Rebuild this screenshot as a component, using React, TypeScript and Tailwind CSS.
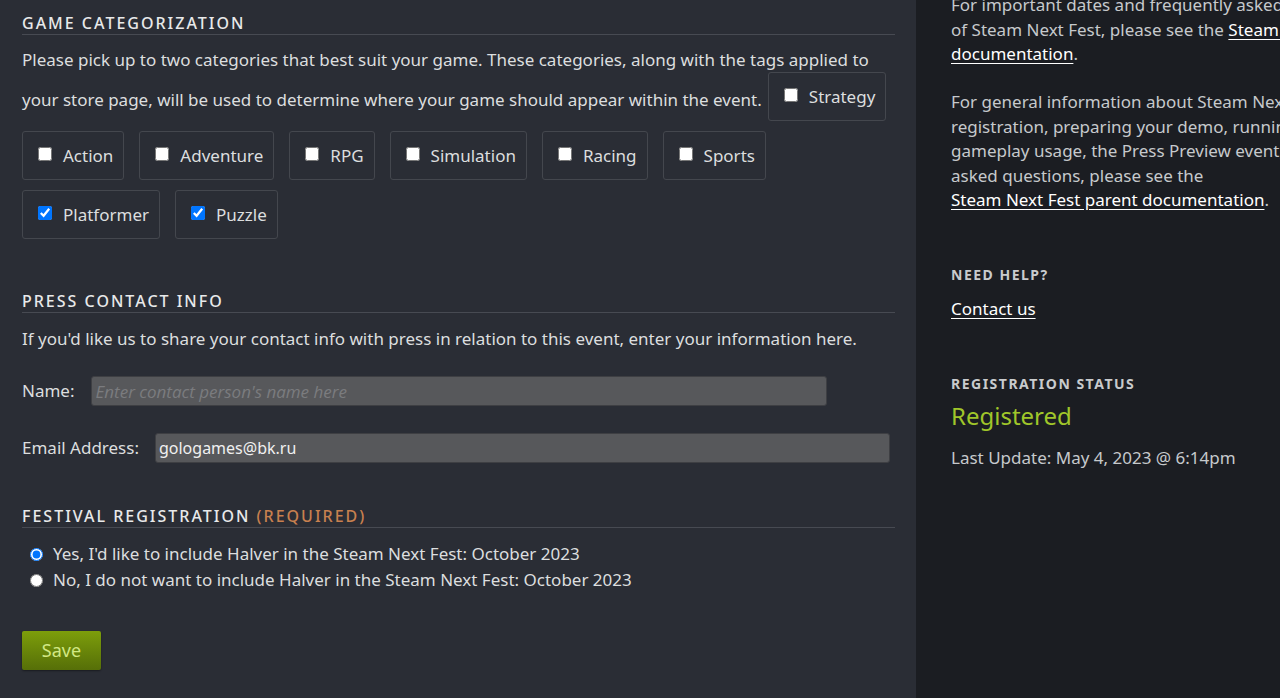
import React from 'react';

const font = { fontFamily: '"Noto Sans", "Open Sans", Arial, sans-serif' };

const SectionTitle: React.FC<{ children: React.ReactNode }> = ({ children }) => (
  <h2 className="text-[16px] leading-[20px] font-medium uppercase tracking-[2px] text-[#e8e9ea] pb-[1px] border-b border-[#474a52]">
    {children}
  </h2>
);

const Category: React.FC<{ label: string; checked?: boolean; className?: string }> = ({ label, checked, className }) => (
  <label
    className={`inline-flex items-center align-middle h-[49px] pl-[15px] pr-[10px] mb-[10px] border border-[#44474e] rounded-[3px] text-[17px] leading-[24px] text-[#dcdedf] ${className ?? 'mr-[15px]'}`}
  >
    <input type="checkbox" defaultChecked={checked} className="m-0 w-[14px] h-[14px] -translate-y-[2px]" />
    <span className="ml-[11px]">{label}</span>
  </label>
);

export default function App() {
  return (
    <div className="flex w-[1280px] h-[698px] overflow-hidden" style={font}>
      {/* Main form column */}
      <div className="w-[916px] shrink-0 bg-[#2a2d35] pl-[22px] pr-[21px] pt-[13px] text-[#dcdedf]">
        <SectionTitle>Game Categorization</SectionTitle>
        <div className="mt-[13px] text-[17px] leading-[24px]">
          Please pick up to two categories that best suit your game. These categories, along with the tags applied to
          your store page, will be used to determine where your game should appear within the event.
          <Category label="Strategy" className="ml-[6px]" />
          <Category label="Action" />
          <Category label="Adventure" />
          <Category label="RPG" />
          <Category label="Simulation" />
          <Category label="Racing" />
          <Category label="Sports" />
          <br />
          <Category label="Platformer" checked />
          <Category label="Puzzle" checked />
        </div>

        <div className="mt-[42px]">
          <SectionTitle>Press Contact Info</SectionTitle>
        </div>
        <p className="mt-[14px] text-[17px] leading-[24px]">
          If you'd like us to share your contact info with press in relation to this event, enter your information here.
        </p>
        <div className="mt-[25px] flex items-center gap-[16px] text-[17px]">
          <span>Name:</span>
          <input
            type="text"
            placeholder="Enter contact person's name here"
            className="w-[736px] h-[30px] px-[4px] bg-[#57585b] border border-[#3e3f43] rounded-[3px] text-[17px] italic text-[#dcdedf] placeholder:text-[#7b7c7f] outline-none"
            style={{ fontFamily: '"Open Sans", "Noto Sans", sans-serif' }}
          />
        </div>
        <div className="mt-[27px] flex items-center gap-[16px] text-[17px]">
          <span>Email Address:</span>
          <input
            type="text"
            defaultValue="gologames@bk.ru"
            className="w-[735px] h-[30px] px-[3px] bg-[#57585b] border border-[#3e3f43] rounded-[3px] text-[16px] text-[#f0f0f0] outline-none"
          />
        </div>

        <div className="mt-[43px]">
          <SectionTitle>
            Festival Registration <span className="text-[#c8804f]">(Required)</span>
          </SectionTitle>
        </div>
        <div className="mt-[13px] text-[17px] leading-[26px]">
          <label className="flex items-center">
            <input type="radio" name="fest" defaultChecked className="m-0 ml-[8px] w-[13px] h-[13px]" />
            <span className="ml-[10px]">Yes, I'd like to include Halver in the Steam Next Fest: October 2023</span>
          </label>
          <label className="flex items-center">
            <input type="radio" name="fest" className="m-0 ml-[8px] w-[13px] h-[13px]" />
            <span className="ml-[10px]">No, I do not want to include Halver in the Steam Next Fest: October 2023</span>
          </label>
        </div>
        <button className="mt-[38px] w-[79px] h-[39px] rounded-[2px] bg-gradient-to-b from-[#7d9e0b] to-[#566f08] text-[#d2e885] text-[18px] shadow-[0_1px_2px_rgba(0,0,0,0.4)]">
          Save
        </button>
      </div>

      {/* Sidebar */}
      <div className="flex-1 min-w-0 overflow-hidden bg-[#1b1d22] pl-[35px] text-[#c6c9cc]">
        <div className="w-[440px] whitespace-nowrap text-[17px] leading-[24.5px]">
          <p className="-mt-[7px]">
            For important dates and frequently asked questions about this edition
            <br />
            of Steam Next Fest, please see the{' '}
            <a href="#" className="text-white underline underline-offset-[3px]">Steam Next Fest</a>
            <br />
            <a href="#" className="text-white underline underline-offset-[3px]">documentation</a>.
          </p>
          <p className="mt-[23.5px]">
            For general information about Steam Next Fest, including
            <br />
            registration, preparing your demo, running a livestream,
            <br />
            gameplay usage, the Press Preview event, and frequently
            <br />
            asked questions, please see the
            <br />
            <a href="#" className="text-white underline underline-offset-[3px]">Steam Next Fest parent documentation</a>.
          </p>

          <h3 className="mt-[53px] text-[14px] leading-[18px] font-bold uppercase tracking-[1.5px] text-[#c9cbcd]">
            Need Help?
          </h3>
          <a href="#" className="block mt-[13px] leading-[24px] text-white underline underline-offset-[3px]">
            Contact us
          </a>

          <h3 className="mt-[54px] text-[14px] leading-[18px] font-bold uppercase tracking-[1.5px] text-[#c9cbcd]">
            Registration Status
          </h3>
          <div className="mt-[8px] text-[24px] leading-[30px] text-[#a0c62a]">Registered</div>
          <div className="mt-[15px] leading-[24px]">Last Update: May 4, 2023 @ 6:14pm</div>
        </div>
      </div>
    </div>
  );
}
